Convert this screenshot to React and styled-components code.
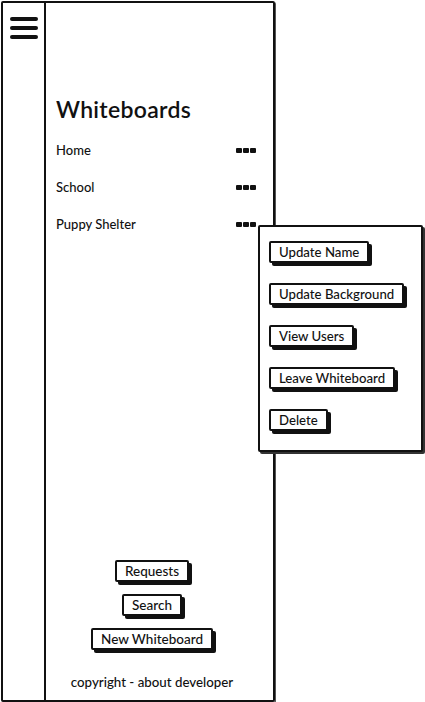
import React from "react";
import styled, { createGlobalStyle } from "styled-components";

const GlobalStyle = createGlobalStyle`
  html, body {
    margin: 0;
    padding: 0;
    background: #fff;
  }
  body {
    font-family: "Lato", "Noto Sans", sans-serif;
    color: #111;
  }
`;

const Page = styled.div`
  position: relative;
  width: 425px;
  height: 702px;
  overflow: hidden;
`;

const Frame = styled.div`
  display: flex;
  width: 270px;
  height: 697px;
  margin: 1px 0 0 1px;
  border: 2px solid #111;
  border-radius: 2px;
  box-shadow: 1px 1px 0 #555;
`;

const Sidebar = styled.div`
  width: 43px;
  border-right: 2px solid #111;
  padding: 14px 0 0 7px;
  box-sizing: border-box;
`;

const Burger = styled.div`
  display: flex;
  flex-direction: column;
  gap: 5px;
  width: 28px;
`;

const BurgerLine = styled.span`
  display: block;
  height: 4px;
  border-radius: 2px;
  background: #111;
`;

const Panel = styled.div`
  flex: 1;
  display: flex;
  flex-direction: column;
  padding: 92px 16px 10px 10px;
`;

const Title = styled.h1`
  margin: 0 0 19px;
  font-size: 23px;
  font-weight: 600;
  letter-spacing: 0.3px;
`;

const BoardList = styled.div`
  display: flex;
  flex-direction: column;
  gap: 21px;
`;

const BoardRow = styled.div`
  display: flex;
  align-items: center;
  justify-content: space-between;
  height: 16px;
  font-size: 13px;
  font-weight: 500;
`;

const Dots = styled.div`
  display: flex;
  gap: 1px;
  margin-right: 1px;
`;

const Dot = styled.span`
  width: 6px;
  height: 5px;
  border-radius: 1px;
  background: #111;
`;

const Spacer = styled.div`
  flex: 1;
`;

const BottomGroup = styled.div`
  display: flex;
  flex-direction: column;
  align-items: center;
  margin-right: 9px;
`;

const SketchButton = styled.button`
  font-family: inherit;
  font-size: ${(p) => (p.small ? 13.2 : 13.5)}px;
  font-weight: 500;
  color: #111;
  background: #fff;
  border: 2px solid #111;
  border-radius: 2px;
  box-shadow: 3px 3px 0 #111;
  padding: 0 8px;
  height: 22px;
  margin-bottom: ${(p) => p.gap || 0}px;
  cursor: pointer;
  white-space: nowrap;
`;

const Copyright = styled.div`
  margin-top: 24px;
  font-size: 13.3px;
  font-weight: 500;
  text-align: center;
`;

const Menu = styled.div`
  position: absolute;
  left: 258px;
  top: 225px;
  width: 165px;
  height: 227px;
  border: 2px solid #111;
  border-radius: 2px;
  box-shadow: 2px 2px 0 #333;
  background: #fff;
  display: flex;
  flex-direction: column;
  align-items: flex-start;
  gap: 20px;
  padding: 14px 0 0 9px;
  box-sizing: border-box;
`;

const boards = ["Home", "School", "Puppy Shelter"];
const menuItems = [
  "Update Name",
  "Update Background",
  "View Users",
  "Leave Whiteboard",
  "Delete",
];

function App() {
  return (
    <Page>
      <GlobalStyle />
      <Frame>
        <Sidebar>
          <Burger>
            <BurgerLine />
            <BurgerLine />
            <BurgerLine />
          </Burger>
        </Sidebar>
        <Panel>
          <Title>Whiteboards</Title>
          <BoardList>
            {boards.map((name) => (
              <BoardRow key={name}>
                {name}
                <Dots>
                  <Dot />
                  <Dot />
                  <Dot />
                </Dots>
              </BoardRow>
            ))}
          </BoardList>
          <Spacer />
          <BottomGroup>
            <SketchButton gap={12}>Requests</SketchButton>
            <SketchButton gap={12}>Search</SketchButton>
            <SketchButton>New Whiteboard</SketchButton>
            <Copyright>copyright - about developer</Copyright>
          </BottomGroup>
        </Panel>
      </Frame>
      <Menu>
        {menuItems.map((label) => (
          <SketchButton small key={label}>
            {label}
          </SketchButton>
        ))}
      </Menu>
    </Page>
  );
}

export default App;
